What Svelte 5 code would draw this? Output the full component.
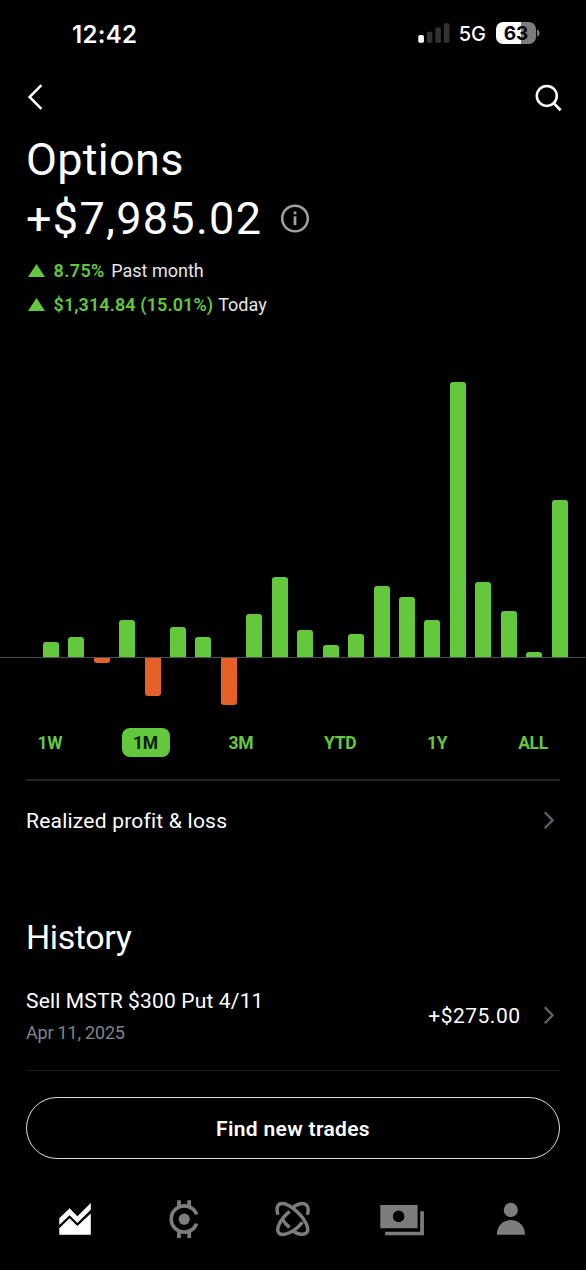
<script lang="ts">
	// daily profit and loss, in chart pixels
	const days = [15, 20, -5, 37, -38, 30, 20, -47, 43, 80, 27, 12, 23, 71, 60, 37.5, 275, 75.5, 46.5, 5.5, 157];
	const ranges = ['1W', '1M', '3M', 'YTD', '1Y', 'ALL'];

	let selected = $state('1M');
</script>

{#snippet chevron()}
	<svg class="chevron" width="12" height="20" viewBox="0 0 12 20">
		<path d="M1.8 1.3 L9.6 9.3 L1.8 17.3" />
	</svg>
{/snippet}

<div class="screen">
	<div class="status-bar">
		<span class="clock">12:42</span>
		<div class="status-icons">
			<svg width="32" height="20" viewBox="0 0 32 20">
				<rect x="0.3" y="12" width="5.6" height="7.8" rx="1.6" fill="#fff" />
				<rect x="8.8" y="8.8" width="5.6" height="11" rx="1.6" fill="#333" />
				<rect x="17.3" y="4.4" width="5.6" height="15.4" rx="1.6" fill="#333" />
				<rect x="25.8" y="0.2" width="5.6" height="19.6" rx="1.6" fill="#333" />
			</svg>
			<span class="network">5G</span>
			<div class="battery"><span>63</span></div>
			<svg class="battery-tip" width="4" height="8" viewBox="0 0 4 8">
				<path d="M0 0.5 C3.5 1.5 3.5 6.5 0 7.5 Z" fill="#7d7d7d" />
			</svg>
		</div>
	</div>

	<header class="top-nav">
		<svg width="18" height="28" viewBox="0 0 18 28">
			<path d="M15.4 2.2 L3.6 14 L15.4 25.8" fill="none" stroke="#fff" stroke-width="2.5" />
		</svg>
		<svg width="28" height="30" viewBox="0 0 28 30">
			<circle cx="12.8" cy="13.9" r="10" fill="none" stroke="#fff" stroke-width="2.5" />
			<path d="M19.7 21.1 L26.6 28.3" stroke="#fff" stroke-width="2.8" />
		</svg>
	</header>

	<section class="summary">
		<h1>Options</h1>
		<div class="amount">
			<span>+$7,985.02</span>
			<svg width="30" height="30" viewBox="0 0 30 30">
				<circle cx="15" cy="14.5" r="12.8" fill="none" stroke="#a0a0a0" stroke-width="2.5" />
				<rect x="13.6" y="7.5" width="2.8" height="2.8" fill="#a0a0a0" />
				<rect x="13.6" y="12.3" width="2.8" height="8.8" fill="#a0a0a0" />
			</svg>
		</div>
		<p class="change month">
			<svg width="17" height="13" viewBox="0 0 17 13"><path d="M8.5 0 L17 13 L0 13 Z" /></svg>
			<b>8.75%</b>
			<span>Past month</span>
		</p>
		<p class="change">
			<svg width="17" height="13" viewBox="0 0 17 13"><path d="M8.5 0 L17 13 L0 13 Z" /></svg>
			<b>$1,314.84 (15.01%)</b>
			<span>Today</span>
		</p>
	</section>

	<section class="chart">
		<div class="gains">
			{#each days as day}
				<div class="bar" style="height: {Math.max(day, 0)}px"></div>
			{/each}
		</div>
		<div class="losses">
			{#each days as day}
				<div class="bar" style="height: {Math.max(-day, 0)}px"></div>
			{/each}
		</div>
	</section>

	<div class="ranges">
		{#each ranges as range}
			<button class:active={range === selected} onclick={() => (selected = range)}>{range}</button>
		{/each}
	</div>

	<div class="row realized">
		<span>Realized profit &amp; loss</span>
		{@render chevron()}
	</div>

	<h2>History</h2>

	<div class="row trade">
		<div class="trade-info">
			<span class="trade-name">Sell MSTR $300 Put 4/11</span>
			<span class="trade-date">Apr 11, 2025</span>
		</div>
		<span class="trade-value">+$275.00</span>
		{@render chevron()}
	</div>

	<button class="find">Find new trades</button>

	<nav class="tabs">
		<svg width="36" height="40" viewBox="0 0 36 40" fill="#fff">
			<path d="M2.3 18.3 L12.6 8.3 L20.4 16.2 L33.8 3 V9.7 L20.4 23 L12.6 15.2 L2.3 25 Z" />
			<path d="M2.3 28.2 L12.6 18.3 L20.4 26 L33.8 13.6 V34.8 H2.3 Z" />
		</svg>
		<svg width="36" height="40" viewBox="0 0 36 40" fill="none" stroke="#7d7d7d">
			<path d="M30.6 14.4 A13.1 13.1 0 1 0 30.6 23.6" stroke-width="3.6" />
			<path d="M13 0.2 V6.6 M23.2 0.2 V6.6 M13 32 V38 M23.2 32 V38" stroke-width="3.8" />
			<path d="M13 6 H23.2 M13 32.3 H23.2" stroke-width="2.4" />
			<circle cx="18.2" cy="19.2" r="5.6" fill="#7d7d7d" stroke="none" />
		</svg>
		<svg width="36" height="40" viewBox="0 0 36 40" fill="none" stroke="#7d7d7d" stroke-width="3.5">
			<path d="M3 14.8 C1 8.1 2.3 3.6 7.2 3.6 C12 3.6 17.5 7.4 23.2 12.8 C30 19.4 35 28.6 31.7 32.6 C29 35.6 23 34.3 17.6 30.9" />
			<path d="M18.4 7 C23.6 3.6 28.7 2.6 31.4 5 C33.6 7.2 33.7 10.6 32.3 14.8" />
			<path d="M14.6 11.3 C5.4 18.9 0.2 29.6 4 33.1 C8.6 37.2 20.6 31.1 27.3 22.2" />
			<path d="M7.2 19.1 C9.2 22.2 11.2 24.6 14.4 27.3" />
		</svg>
		<svg width="46" height="40" viewBox="0 0 46 40" fill="#7d7d7d">
			<path fill-rule="evenodd" d="M1.3 5 H38.6 V28.3 H1.3 Z M19.6 10.6 A5.8 5.8 0 1 0 19.6 22.2 A5.8 5.8 0 1 0 19.6 10.6 Z" />
			<path d="M41.2 11.3 H44.9 V35.3 H6.2 V31.8 H41.2 Z" />
		</svg>
		<svg width="36" height="40" viewBox="0 0 36 40" fill="#7d7d7d">
			<circle cx="17.8" cy="9.9" r="7.1" />
			<path d="M3.9 34.8 V33 C4.6 25.4 10.6 20 17.9 20 C25.2 20 31.2 25.4 31.9 33 V34.8 Z" />
		</svg>
	</nav>
</div>

<style>
	:global(body) {
		background: #000;
	}

	.screen {
		width: 586px;
		height: 1270px;
		overflow: hidden;
		background: #000;
		color: #fff;
		font-family: Roboto, 'Liberation Sans', sans-serif;
		white-space: nowrap;
	}

	button {
		padding: 0;
		border: none;
		background: none;
		color: inherit;
		font-family: inherit;
	}

	.status-bar {
		display: flex;
		justify-content: space-between;
		align-items: center;
		box-sizing: border-box;
		height: 68px;
		padding: 0 45px 0 72px;
		font-family: Inter, sans-serif;
	}

	.clock {
		font-size: 24px;
		font-weight: 600;
		letter-spacing: 0.3px;
	}

	.status-icons {
		display: flex;
		align-items: center;
		height: 22px;
		margin-bottom: 2px;
	}

	.network {
		margin: 2px 10px 0 9px;
		font-size: 20px;
		font-weight: 500;
	}

	.battery {
		width: 40px;
		height: 22px;
		border-radius: 7px;
		background: linear-gradient(90deg, #fff 63%, #7d7d7d 63%);
		color: #000;
		font-size: 19px;
		font-weight: 700;
		line-height: 23px;
		text-align: center;
	}

	.battery-tip {
		margin-left: 1px;
	}

	.top-nav {
		display: flex;
		justify-content: space-between;
		align-items: center;
		height: 58px;
		padding: 0 24px 0 26px;
	}

	.summary {
		padding: 4px 26px 0;
	}

	h1 {
		margin: 0;
		font-size: 45px;
		font-weight: 400;
		line-height: 59px;
		letter-spacing: 0.3px;
	}

	.amount {
		display: flex;
		align-items: center;
		gap: 18px;
		height: 59px;
		font-size: 45px;
		letter-spacing: 1.3px;
	}

	.change {
		display: flex;
		align-items: center;
		height: 34px;
		margin: 0;
		padding-left: 2px;
		font-size: 18px;
	}

	.month {
		margin-top: 5px;
	}

	.change svg {
		margin-right: 8.5px;
		fill: #64c83c;
	}

	.change b {
		margin-right: 5px;
		color: #64c83c;
		font-weight: 600;
		letter-spacing: 0.1px;
	}

	.month b {
		margin-right: 6.5px;
		letter-spacing: 0.4px;
	}

	.change span {
		color: #e6e6e6;
	}

	.gains,
	.losses {
		display: flex;
		justify-content: space-between;
		padding: 0 18px 0 42.7px;
	}

	.gains {
		align-items: flex-end;
		height: 336px;
		border-bottom: 1px solid #4a4f52;
	}

	.losses {
		align-items: flex-start;
		height: 70px;
	}

	.bar {
		width: 16px;
	}

	.gains .bar {
		border-radius: 3px 3px 0 0;
		background: #64c83c;
	}

	.losses .bar {
		border-radius: 0 0 3px 3px;
		background: #e66128;
	}

	.ranges {
		display: flex;
		justify-content: space-between;
		margin: 0 26px;
		padding-bottom: 22px;
		border-bottom: 2px solid #202424;
	}

	.ranges button {
		height: 29px;
		padding: 0 12px 0 11.5px;
		border-radius: 8px;
		color: #64c83c;
		font-size: 17.5px;
		font-weight: 700;
		letter-spacing: -0.3px;
	}

	.ranges .active {
		background: #64c83c;
		color: #0a1e00;
	}

	.row {
		display: flex;
		align-items: center;
		margin: 0 26px;
		font-size: 21px;
	}

	.realized {
		justify-content: space-between;
		height: 79px;
		letter-spacing: 0.22px;
	}

	.chevron {
		margin-right: 5px;
		fill: none;
		stroke: #5c6468;
		stroke-width: 2.3;
	}

	h2 {
		margin: 53px 26px 0;
		font-size: 34px;
		font-weight: 400;
		line-height: 48px;
		letter-spacing: -0.4px;
	}

	.trade {
		height: 109px;
		border-bottom: 1px solid #181818;
	}

	.trade-info {
		display: flex;
		flex: 1;
		flex-direction: column;
		padding-top: 2px;
	}

	.trade-name,
	.trade-date {
		line-height: 31px;
	}

	.trade-name {
		letter-spacing: 0.16px;
	}

	.trade-date {
		color: #7c858c;
		font-size: 18px;
		letter-spacing: -0.2px;
	}

	.trade-value {
		margin-right: 22.5px;
		letter-spacing: 0.5px;
	}

	.find {
		display: block;
		box-sizing: border-box;
		width: 534px;
		height: 62px;
		margin: 26px auto 0;
		padding-top: 2px;
		border: 1.3px solid #ddd;
		border-radius: 31px;
		font-size: 21px;
		font-weight: 600;
		letter-spacing: 0.33px;
	}

	.tabs {
		display: grid;
		grid-template-columns: repeat(5, 109px);
		justify-content: center;
		justify-items: center;
		padding-top: 41px;
	}
</style>
